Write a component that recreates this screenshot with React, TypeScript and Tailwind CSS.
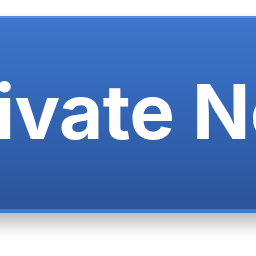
export default function App() {
  return (
    <div className="w-[256px] h-[256px] overflow-hidden bg-white pt-[16px]">
      <div className="-ml-[140px] w-[720px]">
        <button className="flex h-[197px] w-full items-center justify-start pl-[54px] pb-[6px] border-t-[2px] border-b-[4px] border-t-[#5a8ce0] border-b-[#3f78d0] bg-gradient-to-b from-[#3d76cc] to-[#2a549c] shadow-[0_10px_16px_rgba(0,0,0,0.28)]">
          <span className="whitespace-nowrap text-[76px] font-bold leading-none tracking-[-0.3px] text-white [font-family:Inter,sans-serif]">
            Private Network
          </span>
        </button>
      </div>
    </div>
  );
}
